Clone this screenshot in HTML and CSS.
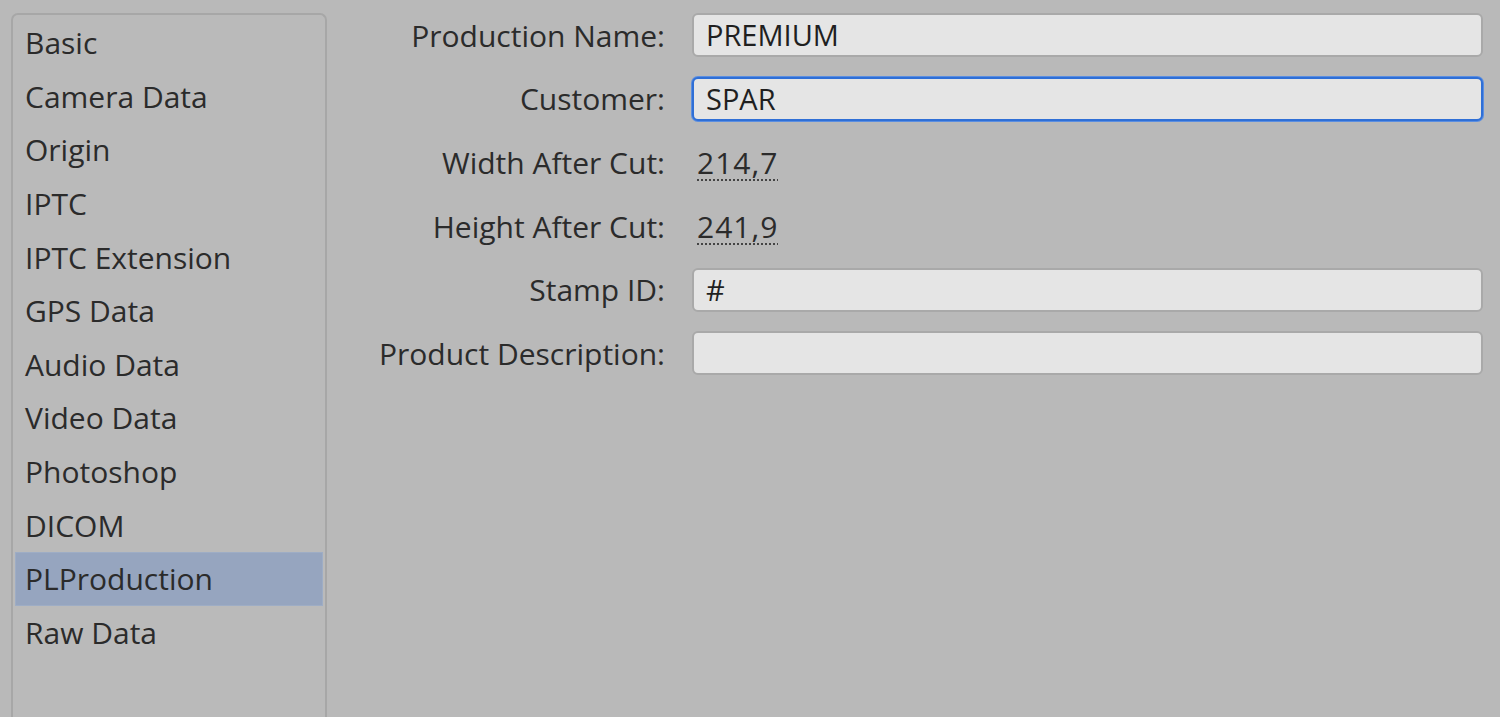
FILE: index.html
```html
<!DOCTYPE html>
<html>
<head>
<meta charset="utf-8">
<link rel="stylesheet" href="styles.css">
</head>
<body>
<div class="app">
  <div class="sidebar">
    <div class="item">Basic</div>
    <div class="item">Camera Data</div>
    <div class="item">Origin</div>
    <div class="item">IPTC</div>
    <div class="item">IPTC Extension</div>
    <div class="item">GPS Data</div>
    <div class="item">Audio Data</div>
    <div class="item">Video Data</div>
    <div class="item">Photoshop</div>
    <div class="item">DICOM</div>
    <div class="item selected">PLProduction</div>
    <div class="item">Raw Data</div>
  </div>
  <div class="form">
    <div class="label">Production Name:</div>
    <div class="field">PREMIUM</div>
    <div class="label">Customer:</div>
    <div class="field focused">SPAR</div>
    <div class="label">Width After Cut:</div>
    <div class="value"><span class="dotted">214,7</span></div>
    <div class="label">Height After Cut:</div>
    <div class="value"><span class="dotted">241,9</span></div>
    <div class="label">Stamp ID:</div>
    <div class="field">#</div>
    <div class="label">Product Description:</div>
    <div class="field"></div>
  </div>
</div>
</body>
</html>
```
FILE: styles.css
```css
html, body {
  margin: 0;
  padding: 0;
  background: #b9b9b9;
  overflow: hidden;
}
body {
  font-family: "Open Sans", "Noto Sans", sans-serif;
  font-size: 30px;
  color: #2b2b2b;
  width: 1500px;
  height: 717px;
}
.app {
  display: flex;
  align-items: flex-start;
  height: 717px;
}
.sidebar {
  margin: 13px 0 0 11px;
  width: 316px;
  height: 704px;
  flex: none;
  box-sizing: border-box;
  border: 2px solid #a7a7a7;
  border-bottom: none;
  border-radius: 7px 7px 0 0;
  padding: 1px 2px;
  background: #bababa;
}
.item {
  height: 53.65px;
  line-height: 53.65px;
  padding-left: 10px;
  box-sizing: border-box;
  white-space: nowrap;
}
.item.selected {
  background: #96a5bf;
  border: 1px solid #9eadc5;
  line-height: 51.65px;
  padding-left: 9px;
}
.form {
  flex: 1;
  display: grid;
  grid-template-columns: 338px 791px;
  column-gap: 27px;
  grid-auto-rows: 44px;
  row-gap: 19.7px;
  margin-top: 13px;
  align-items: center;
}
.label {
  text-align: right;
  white-space: nowrap;
}
.field {
  height: 44px;
  box-sizing: border-box;
  background: #e5e5e5;
  border: 2px solid #a9a9a9;
  border-radius: 6px;
  padding-left: 12px;
  line-height: 40px;
  font-size: 29px;
  color: #1f1f1f;
}
.field.focused {
  border-color: #2f6fd6;
  box-shadow: 0 0 0 1px #5b8ee0;
}
.value {
  padding-left: 5px;
  letter-spacing: 1px;
}
.dotted {
  text-decoration: underline dotted #444;
  text-decoration-thickness: 2px;
  text-underline-offset: 6px;
}
```
